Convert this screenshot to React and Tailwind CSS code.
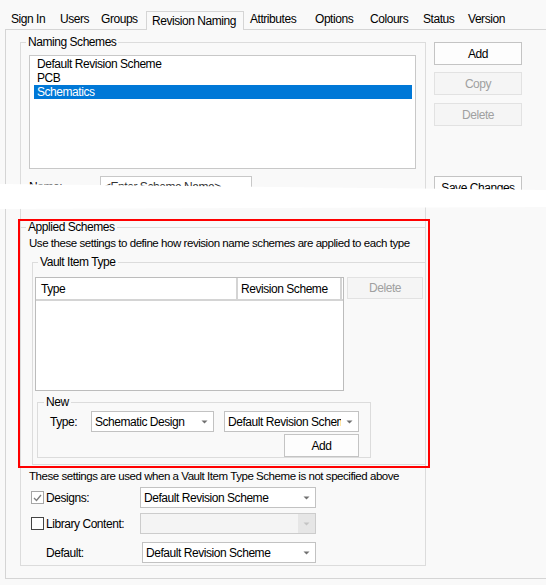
import clsx from "clsx";

const tabs = [
  { label: "Sign In", w: "w-[49px]" },
  { label: "Users", w: "w-[41px]" },
  { label: "Groups", w: "w-[51px]" },
  { label: "Revision Naming", w: "w-[98px]", active: true },
  { label: "Attributes", w: "w-[65px]" },
  { label: "Options", w: "w-[55px]" },
  { label: "Colours", w: "w-[53px]" },
  { label: "Status", w: "w-[45px]" },
  { label: "Version", w: "w-[50px]" },
];

const Arrow = ({ color = "#707070" }) => (
  <svg width="7" height="4" viewBox="0 0 7 4">
    <polygon points="0.5,0.5 6.5,0.5 3.5,3.5" fill={color} />
  </svg>
);

const Combo = ({ value, className, disabled }) => (
  <div
    className={clsx(
      "flex h-[21px] items-center border",
      disabled ? "border-[#cccccc] bg-[#f4f4f4]" : "border-[#c2c2c2] bg-white",
      className
    )}
  >
    <span className="min-w-0 flex-1 overflow-hidden whitespace-nowrap pl-[3px]">{value}</span>
    {disabled ? (
      <span className="flex h-full w-[17px] items-center justify-center bg-[#e6e6e6]">
        <Arrow color="#c4c4c4" />
      </span>
    ) : (
      <span className="flex w-[17px] shrink-0 items-center justify-center">
        <Arrow />
      </span>
    )}
  </div>
);

const Button = ({ children, className, disabled }) => (
  <div
    className={clsx(
      "flex items-center justify-center border",
      disabled
        ? "border-[#e2e2e2] bg-[#f5f5f5] text-[#a0a0a0]"
        : "border-[#c4c4c4] bg-[#fdfdfd] text-black",
      className
    )}
  >
    {children}
  </div>
);

const Check = ({ checked }) =>
  checked ? (
    <span className="flex h-[13px] w-[13px] shrink-0 items-center justify-center border border-[#a6a6a6] bg-white">
      <svg width="9" height="8" viewBox="0 0 9 8">
        <polyline points="1,4 3.5,6.5 8,1" fill="none" stroke="#7c7c7c" strokeWidth="1.3" />
      </svg>
    </span>
  ) : (
    <span className="h-[13px] w-[13px] shrink-0 border border-[#444444] bg-white" />
  );

export default function App() {
  return (
    <div className='relative h-[585px] w-[546px] overflow-hidden whitespace-nowrap bg-[#f9f9f9] text-[12px] leading-[14px] tracking-[-0.45px] text-black [font-family:"Liberation_Sans",Arial,sans-serif]'>
      {/* tab strip */}
      <div className="flex h-[29px] items-end pl-[5px]">
        {tabs.map((t) =>
          t.active ? (
            <div
              key={t.label}
              className={clsx(
                "relative z-10 -mb-px h-[19px] border border-b-0 border-[#d5d5d5] bg-[#f9f9f9] pl-[5px] leading-[18px]",
                t.w
              )}
            >
              {t.label}
            </div>
          ) : (
            <div key={t.label} className={clsx("h-[18px] pl-[6px] leading-[17px]", t.w)}>
              {t.label}
            </div>
          )
        )}
      </div>

      {/* tab page */}
      <div className="ml-[5px] h-[550px] border-b border-l border-t border-[#d5d5d5]">
        <div className="flex items-start pl-[14px]">
          <fieldset className="mt-[5px] w-[406px] min-w-0 shrink-0 border border-[#dcdcdc]">
            <legend className="ml-[5px] px-[2px] leading-[14px]">Naming Schemes</legend>
            <div className="pb-[2px] pl-[8px] pr-[9px]">
              <div className="mt-[6px] h-[114px] border border-[#c8c8c8] bg-white pt-[1px]">
                <div className="h-[14px] pl-[7px]">Default Revision Scheme</div>
                <div className="h-[14px] pl-[7px]">PCB</div>
                <div className="ml-[4px] mr-[3px] h-[14px] bg-[#0078d7] pl-[3px] text-white">Schematics</div>
              </div>

              <div className="mt-[7px] flex h-[21px] items-center">
                <span className="w-[71px]">Name:</span>
                <div className="flex h-[21px] w-[152px] items-center border border-[#c8c8c8] bg-white pl-[3px] text-[#333333]">
                  {"<Enter Scheme Name>"}
                </div>
              </div>

              <fieldset className="-ml-[8px] -mr-[9px] mt-[23px] min-w-0 border-t border-[#dcdcdc]">
                <legend className="ml-[5px] px-[2px] leading-[14px]">Applied Schemes</legend>
                <p className="mt-[2px] h-[14px] pl-[8px] text-[11.5px]">
                  Use these settings to define how revision name schemes are applied to each type
                </p>

                <fieldset className="ml-[11px] mt-[5px] min-w-0 border-b border-l border-t border-[#dcdcdc] pb-[6px]">
                  <legend className="ml-[5px] px-[2px] leading-[14px]">Vault Item Type</legend>
                  <div className="mt-[8px] flex items-start pl-[2px]">
                    <div className="h-[114px] w-[309px] border border-[#bcbcbc] bg-white">
                      <div className="flex h-[23px] border-b-2 border-[#d4d4d4]">
                        <div className="flex w-[202px] items-center border-r-2 border-[#d4d4d4] pl-[5px]">Type</div>
                        <div className="flex w-[104px] items-center border-r-2 border-[#d4d4d4] pl-[3px]">
                          Revision Scheme
                        </div>
                      </div>
                    </div>
                    <Button disabled className="ml-[3px] h-[22px] w-[76px]">
                      Delete
                    </Button>
                  </div>

                  <fieldset className="ml-[4px] mt-[4px] w-[334px] min-w-0 border border-[#dcdcdc]">
                    <legend className="ml-[6px] px-[2px] leading-[14px]">New</legend>
                    <div className="mt-[2px] flex items-center pl-[12px]">
                      <span className="w-[41px]">Type:</span>
                      <Combo value="Schematic Design" className="w-[123px]" />
                      <Combo value="Default Revision Schem" className="ml-[10px] w-[135px]" />
                    </div>
                    <div className="mt-[2px] pl-[246px]">
                      <Button className="h-[23px] w-[75px]">Add</Button>
                    </div>
                  </fieldset>
                </fieldset>

                <p className="mt-[4px] h-[14px] pl-[8px] text-[11.5px]">
                  These settings are used when a Vault Item Type Scheme is not specified above
                </p>
                <div className="mt-[4px] flex h-[21px] items-center pl-[10px]">
                  <Check checked />
                  <span className="ml-[2px] w-[94px]">Designs:</span>
                  <Combo value="Default Revision Scheme" className="w-[176px]" />
                </div>
                <div className="mt-[5px] flex h-[21px] items-center pl-[10px]">
                  <Check />
                  <span className="ml-[2px] w-[94px]">Library Content:</span>
                  <Combo value="" disabled className="w-[176px]" />
                </div>
                <div className="mt-[8px] flex h-[21px] items-center pl-[25px]">
                  <span className="w-[96px]">Default:</span>
                  <Combo value="Default Revision Scheme" className="w-[174px]" />
                </div>
              </fieldset>
            </div>
          </fieldset>

          <div className="ml-[8px] mt-[12px] flex w-[88px] shrink-0 flex-col">
            <Button className="h-[23px]">Add</Button>
            <Button disabled className="mt-[7px] h-[23px]">
              Copy
            </Button>
            <Button disabled className="mt-[8px] h-[23px]">
              Delete
            </Button>
            <Button className="mt-[50px] h-[23px]">Save Changes</Button>
          </div>
        </div>
      </div>

      {/* torn-out strip of the screenshot */}
      <div className="absolute left-0 top-[183px] h-[28px] w-full bg-white [clip-path:polygon(0_1px,100%_7px,100%_24px,0_26px)]" />

      {/* red highlight frame */}
      <div className="absolute left-[18px] top-[219px] h-[249px] w-[412px] border-2 border-[#ff0000]" />
    </div>
  );
}
